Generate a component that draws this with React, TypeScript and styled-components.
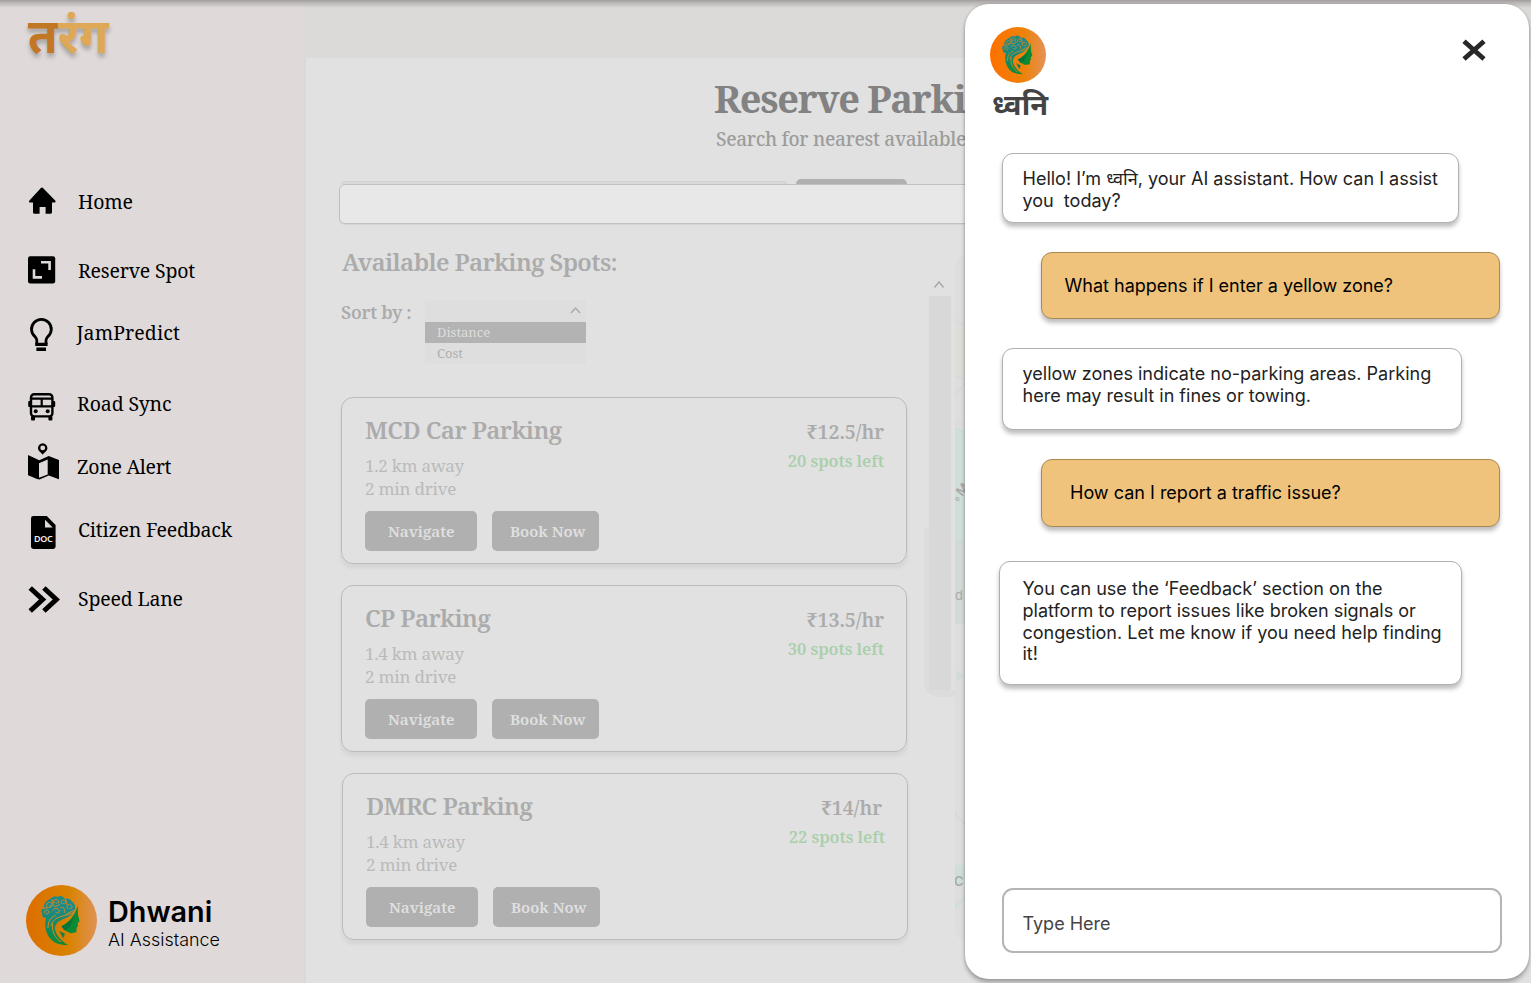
import React from 'react';
import styled, { createGlobalStyle } from 'styled-components';

const slab = `"Roboto Slab", "Noto Serif", "DejaVu Serif", serif`;
const sans = `Inter, "Noto Sans Devanagari", "Noto Sans", sans-serif`;

const GlobalStyle = createGlobalStyle`
  *, *::before, *::after { box-sizing: border-box; }
  body { margin: 0; font-family: ${sans}; }
  p, h1, h2, h3 { margin: 0; font-weight: inherit; font-size: inherit; }
  svg { display: block; flex: none; }
  button { border: 0; padding: 0; background: none; font: inherit; color: inherit; }
`;

const Page = styled.div`
  position: relative;
  display: flex;
  width: 1531px;
  height: 983px;
  overflow: hidden;
  background: #e1e1e1;
`;

const TopShade = styled.div`
  position: absolute;
  inset: 0 0 auto 0;
  height: 8px;
  background: linear-gradient(#a19d9d, rgba(175, 171, 171, 0.75) 35%, rgba(210, 206, 206, 0));
`;

/* ---------- sidebar ---------- */

const Sidebar = styled.aside`
  display: flex;
  flex-direction: column;
  width: 306px;
  padding-left: 26px;
  background: #dfdad9;
  border-right: 2px solid #dbd8d8;
`;

const Brand = styled.h1`
  height: 182px;
  padding: 13px 0 0 2px;
  font: 700 48px/58px "Noto Sans Devanagari", "Noto Sans", sans-serif;
  color: #dea857;
  text-shadow: 0 4px 4px rgba(0, 0, 0, 0.25);
  span { color: #c27725; }
`;

const NavRow = styled.a<{ $gap: number; $indent: number; $track?: number }>`
  display: flex;
  align-items: center;
  height: 40px;
  margin-top: ${(p) => p.$gap}px;
  gap: ${(p) => p.$indent}px;
  font: 400 19.5px/26px ${slab};
  letter-spacing: ${(p) => p.$track ?? -0.18}px;
  color: #000;
  white-space: nowrap;
`;

const NavIcon = styled.svg`
  width: 36px;
  height: 40px;
  overflow: visible;
`;

const Assistant = styled.div`
  display: flex;
  gap: 11px;
  margin-top: auto;
  height: 98px;
`;

const AssistantText = styled.div`
  padding-top: 9px;
`;

const AssistantName = styled.p`
  font: 600 28.8px/36px ${sans};
`;

const AssistantRole = styled.p`
  font: 300 17.9px/20px ${sans};
`;

/* ---------- main ---------- */

const Main = styled.main`
  display: flex;
  flex-direction: column;
  flex: 1;
  min-width: 0;
`;

const Band = styled.div`
  height: 58px;
  flex: none;
  background: #dbdad8;
`;

const Title = styled.h2`
  height: 60px;
  padding: 14px 0 0 408px;
  font: 700 38px/52px ${slab};
  letter-spacing: -1.25px;
  color: #828282;
  white-space: nowrap;
`;

const Subtitle = styled.p`
  height: 61px;
  padding: 8px 0 0 410px;
  font: 500 19px/26px ${slab};
  letter-spacing: -0.3px;
  color: #9c9c9c;
  white-space: nowrap;
`;

const SearchBack = styled.div`
  display: flex;
  align-items: flex-end;
  height: 5px;
  gap: 9px;
  padding-left: 35px;
`;

const FieldEdge = styled.div`
  width: 446px;
  height: 3px;
  border: 1px solid #d0d0d0;
  border-bottom: 0;
  border-radius: 8px 8px 0 0;
  background: #dadada;
`;

const ButtonEdge = styled.div`
  width: 111px;
  height: 5px;
  border-radius: 5px 5px 0 0;
  background: #b0b0b0;
`;

const SearchField = styled.div`
  flex: none;
  height: 40px;
  margin: 0 40px 0 33px;
  border: 1px solid #c0c0c0;
  border-radius: 6px;
  background: #e8e8e8;
  box-shadow: 0 1px 1px rgba(0, 0, 0, 0.06);
`;

const Body = styled.div`
  display: flex;
  padding-left: 35px;
`;

const Listing = styled.section`
  width: 567px;
`;

const ListHeading = styled.h3`
  height: 76px;
  padding: 22px 0 0 1px;
  font: 600 24.2px/32px ${slab};
  letter-spacing: -0.63px;
  color: #ababab;
`;

const SortRow = styled.div`
  display: flex;
  height: 97px;
`;

const SortLabel = styled.span`
  width: 84px;
  font: 600 18px/25px ${slab};
  letter-spacing: -0.3px;
  color: #ababab;
`;

const Dropdown = styled.div`
  width: 161px;
  height: 64px;
  background: #dedede;
`;

const DropHead = styled.div`
  display: flex;
  justify-content: flex-end;
  height: 22px;
  padding: 6px 5px 0 0;
`;

const Option = styled.div<{ $active?: boolean }>`
  height: 21px;
  padding-left: 12px;
  font: 400 13px/20px ${slab};
  color: ${(p) => (p.$active ? '#dedede' : '#b0b0b0')};
  background: ${(p) => (p.$active ? '#b3b3b3' : 'transparent')};
`;

const Card = styled.article<{ $shift?: number }>`
  display: flex;
  flex-direction: column;
  justify-content: space-between;
  width: 566px;
  height: 167px;
  margin: 0 0 21px ${(p) => p.$shift ?? 0}px;
  padding: 16px 22px 12px 23px;
  border: 1px solid #bbb;
  border-radius: 12px;
  box-shadow: 0 4px 4px rgba(0, 0, 0, 0.06);
`;

const CardTop = styled.div`
  display: flex;
  justify-content: space-between;
`;

const SpotName = styled.h3`
  height: 40px;
  font: 600 24.2px/31px ${slab};
  letter-spacing: -0.58px;
  color: #ababab;
`;

const Detail = styled.p`
  font: 400 17px/23px ${slab};
  letter-spacing: -0.22px;
  color: #bababa;
`;

const PriceBox = styled.div<{ $nudge: number }>`
  text-align: right;
  span { display: block; margin-right: ${(p) => p.$nudge}px; }
`;

const Price = styled.span`
  font: 600 19.6px/35px ${slab};
  letter-spacing: -0.05px;
  color: #ababab;
`;

const Left = styled.p`
  font: 600 16.5px/24px ${slab};
  letter-spacing: -0.05px;
  color: #aacfab;
`;

const Actions = styled.div`
  display: flex;
  gap: 15px;
`;

const Action = styled.button<{ $width: number; $pad: number }>`
  width: ${(p) => p.$width}px;
  height: 40px;
  padding-left: ${(p) => p.$pad}px;
  text-align: left;
  white-space: nowrap;
  border-radius: 5px;
  background: #b0b0b0;
  color: #e0e0e0;
  font: 600 15.2px/40px ${slab};
`;

const ScrollColumn = styled.div`
  width: 47px;
  padding: 55px 0 0 16px;
`;

const ScrollArt = styled.svg`
  overflow: visible;
`;

const MapView = styled.svg`
  margin-top: 30px;
`;

/* ---------- chat ---------- */

const Chat = styled.section`
  position: absolute;
  left: 965px;
  top: 4px;
  display: flex;
  flex-direction: column;
  width: 564px;
  height: 975px;
  padding: 23px 27px 26px 25px;
  border-radius: 24px;
  background: #fff;
  box-shadow: 0 4px 4px rgba(0, 0, 0, 0.25), 0 0 3px rgba(0, 0, 0, 0.2);
`;

const ChatHead = styled.header`
  display: flex;
  justify-content: space-between;
  height: 126px;
`;

const ChatName = styled.h2`
  margin-top: 6px;
  padding-left: 2px;
  font: 700 29px/38px "Noto Sans Devanagari", "Noto Sans", sans-serif;
  color: #444;
`;

const Close = styled.svg`
  margin: 11px 15px 0 0;
`;

const Bubble = styled.p<{ $mine?: boolean; $w: number; $h: number; $x: number; $gap: number; $pl: number; $pt: number }>`
  flex: none;
  width: ${(p) => p.$w}px;
  height: ${(p) => p.$h}px;
  margin-left: ${(p) => p.$x}px;
  margin-bottom: ${(p) => p.$gap}px;
  padding: ${(p) => p.$pt}px 0 0 ${(p) => p.$pl}px;
  border: 1px solid ${(p) => (p.$mine ? '#a98952' : '#b0b0b0')};
  border-radius: 11px;
  background: ${(p) => (p.$mine ? '#efc37c' : '#fff')};
  box-shadow: 0 4px 4px rgba(0, 0, 0, 0.25);
  color: ${(p) => (p.$mine ? '#000' : '#222')};
  font: 400 18.03px/21.7px ${sans};
  white-space: pre;
`;

const Composer = styled.div`
  display: flex;
  align-items: center;
  height: 65px;
  margin: auto 0 0 12px;
  padding: 6px 0 0 18.5px;
  border: 2px solid #b5b5b5;
  border-radius: 11px;
  color: #444;
  font: 400 18px/22px ${sans};
`;

/* ---------- drawings ---------- */

function Avatar({ size, id, stops }: { size: number; id: string; stops: string[] }) {
  return (
    <svg width={size} height={size} viewBox="0 0 213 213">
      <defs>
        <linearGradient id={id}>
          <stop offset="0" stopColor={stops[0]} />
          <stop offset="0.6" stopColor={stops[1]} />
          <stop offset="1" stopColor={stops[2]} />
        </linearGradient>
        <linearGradient id={id + 'h'} x1="0" y1="0" x2="0" y2="1">
          <stop offset="0.3" stopColor="#1d8a88" />
          <stop offset="1" stopColor="#0a8a35" />
        </linearGradient>
      </defs>
      <circle cx="106.5" cy="106.5" r="106.5" fill={`url(#${id})`} />
      <path d="M155 62 156 90 161 109 155 114 156 123 152 128 151 142 134 145 116 136 106 124C125 114 145 95 155 62Z" fill="#0a8a35" />
      <path d="M106 124 116 136 130 128 146 92C138 106 124 116 106 124Z" fill="#08743a" />
      <path d="M100 138 117 146 111 160Z" fill="#0e7f4c" />
      <path
        d="M76 40C82 32 92 36 96 35 104 30 112 34 116 41 126 38 136 44 138 50 146 54 150 64 146 74 140 88 128 96 112 102 98 108 88 116 87 128 86 146 106 168 126 180 104 180 86 176 74 162 60 146 54 122 60 98 54 100 46 94 49 86 43 78 48 70 54 69 52 56 62 46 76 40Z"
        fill={`url(#${id}h)`}
      />
      <g fill="none" stroke="#d98a20" strokeLinecap="round">
        <g strokeWidth="2.8">
          <path d="M56 84C54 76 62 72 67 77S66 88 61 86" />
          <path d="M62 64C60 54 70 49 76 54S75 66 70 62" />
          <path d="M84 54C80 44 92 40 97 46S94 57 90 53" />
          <path d="M106 55C103 46 113 42 118 48S115 58 111 55" />
          <path d="M124 70C120 60 130 54 136 60S135 74 130 70" />
          <path d="M80 76C84 68 96 68 99 76S93 87 89 82" />
          <path d="M52 70C62 66 74 70 78 64M78 44 82 62C88 66 100 62 102 58M118 42C124 50 120 58 124 62M104 68C112 64 118 72 116 82M146 76C136 80 128 82 118 90" />
        </g>
        <g strokeWidth="3">
          <path d="M144 82C132 86 118 92 108 94 90 98 78 108 75 122" />
          <path d="M88 92C72 96 66 112 66 128" />
          <path d="M80 116C76 140 88 160 104 170" />
        </g>
      </g>
    </svg>
  );
}

const icons: Record<string, React.ReactNode> = {
  home: (
    <path d="M16 5 29.2 18.4Q30.4 20.4 28.2 20.6H26V30.2Q26 31.8 24.4 31.8H19.6V25H13.6V31.8H8.6Q7 31.8 7 30.2V20.6H4.4Q2.2 20.4 3.4 18.4L14.9 6Q16 4.8 17.1 6Z" />
  ),
  reserve: (
    <>
      <rect x="2" y="5.2" width="27.2" height="27.2" rx="2.2" />
      <path d="M8 18.3V26.4H16M15 11.3H23.6V19" fill="none" stroke="#dfdad9" strokeWidth="2.6" />
    </>
  ),
  bulb: (
    <>
      <path d="M10.8 31V27.3Q10.8 25.9 9.2 23.9A9.9 9.9 0 1 1 21.6 23.9Q20 25.9 20 27.3V31" fill="none" stroke="#000" strokeWidth="2.8" />
      <path d="M9.2 29.8H21.6V32.9H9.2ZM10.4 34.5H20V37.9H10.4Z" />
    </>
  ),
  bus: (
    <>
      <rect x="5" y="10.2" width="21.4" height="22.2" rx="3.2" fill="none" stroke="#000" strokeWidth="2.4" />
      <path d="M5 14.6H26.4M5 22.4H26.4M15.7 14.6V22.4" fill="none" stroke="#000" strokeWidth="2.2" />
      <rect x="2.2" y="17" width="2.6" height="6" rx="1" />
      <rect x="26.6" y="17" width="2.6" height="6" rx="1" />
      <circle cx="9.7" cy="27.3" r="2" />
      <circle cx="21.7" cy="27.3" r="2" />
      <rect x="5" y="32" width="4" height="4.4" rx="1" />
      <rect x="22.4" y="32" width="4" height="4.4" rx="1" />
    </>
  ),
  map: (
    <g transform="translate(0 0.5)">
      <path fillRule="evenodd" d="M2 7.4 13.3 12.7 22.7 8.5 33 12.6V31.8L22.7 28 13.5 32Q11.6 32 2 27.8ZM13 15.8V30.2L21.7 27V12Z" />
      <path fillRule="evenodd" d="M16.7-4.2A4.8 4.8 0 0 1 21.4.6C21.4 3.6 18.6 4.9 16.7 7.3 14.8 4.9 12 3.6 12 .6A4.8 4.8 0 0 1 16.7-4.2ZM16.7-2A2.4 2.4 0 1 0 16.7 2.8 2.4 2.4 0 0 0 16.7-2Z" />
    </g>
  ),
  doc: (
    <>
      <path d="M7.4 6H20.8L29.6 15V36.6Q29.6 39 27.2 39H7.4Q5 39 5 36.6V8.4Q5 6 7.4 6Z" />
      <path d="M19 9.8V17.4H26.7Z" fill="#dfdad9" />
      <text x="17.3" y="32.2" textAnchor="middle" fontSize="9" fontWeight="600" letterSpacing="-0.3" fontFamily="Noto Sans, sans-serif" fill="#eee">DOC</text>
    </>
  ),
  speed: (
    <path d="M4.2 9 16.6 20.5 4.2 32M17.9 9 30.3 20.5 17.9 32" fill="none" stroke="#000" strokeWidth="5" />
  ),
};

const nav = [
  { icon: 'home', label: 'Home', gap: 0, indent: 16 },
  { icon: 'reserve', label: 'Reserve Spot', gap: 29, indent: 16 },
  { icon: 'bulb', label: 'JamPredict', gap: 22, indent: 14.5, track: 0.1 },
  { icon: 'bus', label: 'Road Sync', gap: 31, indent: 15, track: -0.1 },
  { icon: 'map', label: 'Zone Alert', gap: 23, indent: 15, track: -0.3 },
  { icon: 'doc', label: 'Citizen Feedback', gap: 23, indent: 16 },
  { icon: 'speed', label: 'Speed Lane', gap: 29, indent: 16 },
];

const spots = [
  { name: 'MCD Car Parking', km: '1.2', price: '₹12.5/hr', left: 20, nudge: 0, shift: 0 },
  { name: 'CP Parking', km: '1.4', price: '₹13.5/hr', left: 30, nudge: 0, shift: 0 },
  { name: 'DMRC Parking', km: '1.4', price: '₹14/hr', left: 22, nudge: 3, shift: 1 },
];

export default function App() {
  return (
    <Page>
      <GlobalStyle />
      <Sidebar>
        <Brand><span>त</span>रंग</Brand>
        {nav.map((n) => (
          <NavRow key={n.label} $gap={n.gap} $indent={n.indent} $track={n.track}>
            <NavIcon viewBox="0 0 36 40">{icons[n.icon]}</NavIcon>
            {n.label}
          </NavRow>
        ))}
        <Assistant>
          <Avatar size={71} id="side" stops={['#dc6e00', '#d98200', '#df9355']} />
          <AssistantText>
            <AssistantName>Dhwani</AssistantName>
            <AssistantRole>AI Assistance</AssistantRole>
          </AssistantText>
        </Assistant>
      </Sidebar>

      <Main>
        <Band />
        <Title>Reserve Parking</Title>
        <Subtitle>Search for nearest available</Subtitle>
        <SearchBack><FieldEdge /><ButtonEdge /></SearchBack>
        <SearchField />
        <Body>
          <Listing>
            <ListHeading>Available Parking Spots:</ListHeading>
            <SortRow>
              <SortLabel>Sort by :</SortLabel>
              <Dropdown>
                <DropHead>
                  <svg width="11" height="9" viewBox="0 0 11 9"><path d="M1 7 5.5 2 10 7" fill="none" stroke="#aaa" strokeWidth="1.5" /></svg>
                </DropHead>
                <Option $active>Distance</Option>
                <Option>Cost</Option>
              </Dropdown>
            </SortRow>
            {spots.map((s) => (
              <Card key={s.name} $shift={s.shift}>
                <CardTop>
                  <div>
                    <SpotName>{s.name}</SpotName>
                    <Detail>{s.km} km away</Detail>
                    <Detail>2 min drive</Detail>
                  </div>
                  <PriceBox $nudge={s.nudge}>
                    <Price>{s.price}</Price>
                    <Left>{s.left} spots left</Left>
                  </PriceBox>
                </CardTop>
                <Actions>
                  <Action $width={112} $pad={23}>Navigate</Action>
                  <Action $width={107} $pad={18}>Book Now</Action>
                </Actions>
              </Card>
            ))}
          </Listing>
          <ScrollColumn>
            <ScrollArt width="30" height="420" viewBox="0 0 30 420">
              <path d="M0 251 5 248V411H31V418H17Q0 418 0 401Z" fill="#dcdcdc" />
              <rect x="5" y="17" width="22" height="394" fill="#d8d8d8" />
              <path d="M10.5 8.5 15 3 19.5 8.5" fill="none" stroke="#aaa" strokeWidth="1.5" />
            </ScrollArt>
          </ScrollColumn>
          <MapView width="60" height="688" viewBox="0 0 60 688">
            <defs><clipPath id="mapClip"><rect width="60" height="688" rx="14" /></clipPath></defs>
            <g clipPath="url(#mapClip)">
              <rect width="60" height="688" fill="#dddddd" />
              <path d="M0 68 14 74V124L0 122Z" fill="#dedcd7" />
              <path d="M0 66 14 74M0 122 14 128M0 142 14 124M0 170H14" stroke="#d3d5da" fill="none" />
              <path d="M0 172 14 178V286H0Z" fill="#cfdfd7" />
              <path d="M0 286H14V370H0Z" fill="#d2dad6" />
              <path d="M2 376 10 370V382Z" fill="#dcdede" />
              <path d="M2 416 8 422 2 428Z" fill="#cfdbd6" />
              <path d="M0 560 14 574" stroke="#d0d3d9" fill="none" />
              <path d="M0 611H14V640L0 656Z" fill="#cfdfd7" />
              <path d="M0 634 14 622V640L0 650Z" fill="#dddddd" />
              <g fill="#aaaaaa" fontFamily="Inter, sans-serif">
                <text transform="translate(7 243) rotate(-50)" fontSize="13" fontWeight="600">M</text>
                <text transform="translate(2 248) rotate(-40)" fontSize="8">e</text>
                <text x="0" y="346" fontSize="13">d</text>
                <text x="-1" y="632" fontSize="13" fontWeight="600">C</text>
              </g>
            </g>
          </MapView>
        </Body>
      </Main>

      <TopShade />

      <Chat>
        <ChatHead>
          <div>
            <Avatar size={56} id="chat" stops={['#ff7000', '#ee8208', '#e39258']} />
            <ChatName>ध्वनि</ChatName>
          </div>
          <Close width="26" height="24" viewBox="0 0 26 24">
            <path d="M3 3.2 23 21M23 3.2 3 21" stroke="#282828" strokeWidth="4.8" />
          </Close>
        </ChatHead>
        <Bubble $w={457} $h={70} $x={12} $gap={29} $pl={19.5} $pt={14}>{'Hello! I’m ध्वनि, your AI assistant. How can I assist\nyou  today?'}</Bubble>
        <Bubble $mine $w={459} $h={67} $x={51} $gap={29} $pl={22.5} $pt={22}>What happens if I enter a yellow zone?</Bubble>
        <Bubble $w={460} $h={82} $x={12} $gap={29} $pl={19.5} $pt={14}>{'yellow zones indicate no-parking areas. Parking\nhere may result in fines or towing.'}</Bubble>
        <Bubble $mine $w={459} $h={68} $x={51} $gap={34} $pl={28} $pt={22}>How can I report a traffic issue?</Bubble>
        <Bubble $w={463} $h={124} $x={9} $gap={0} $pl={22.5} $pt={16.3}>{'You can use the ‘Feedback’ section on the\nplatform to report issues like broken signals or\ncongestion. Let me know if you need help finding\nit!'}</Bubble>
        <Composer>Type Here</Composer>
      </Chat>
    </Page>
  );
}
